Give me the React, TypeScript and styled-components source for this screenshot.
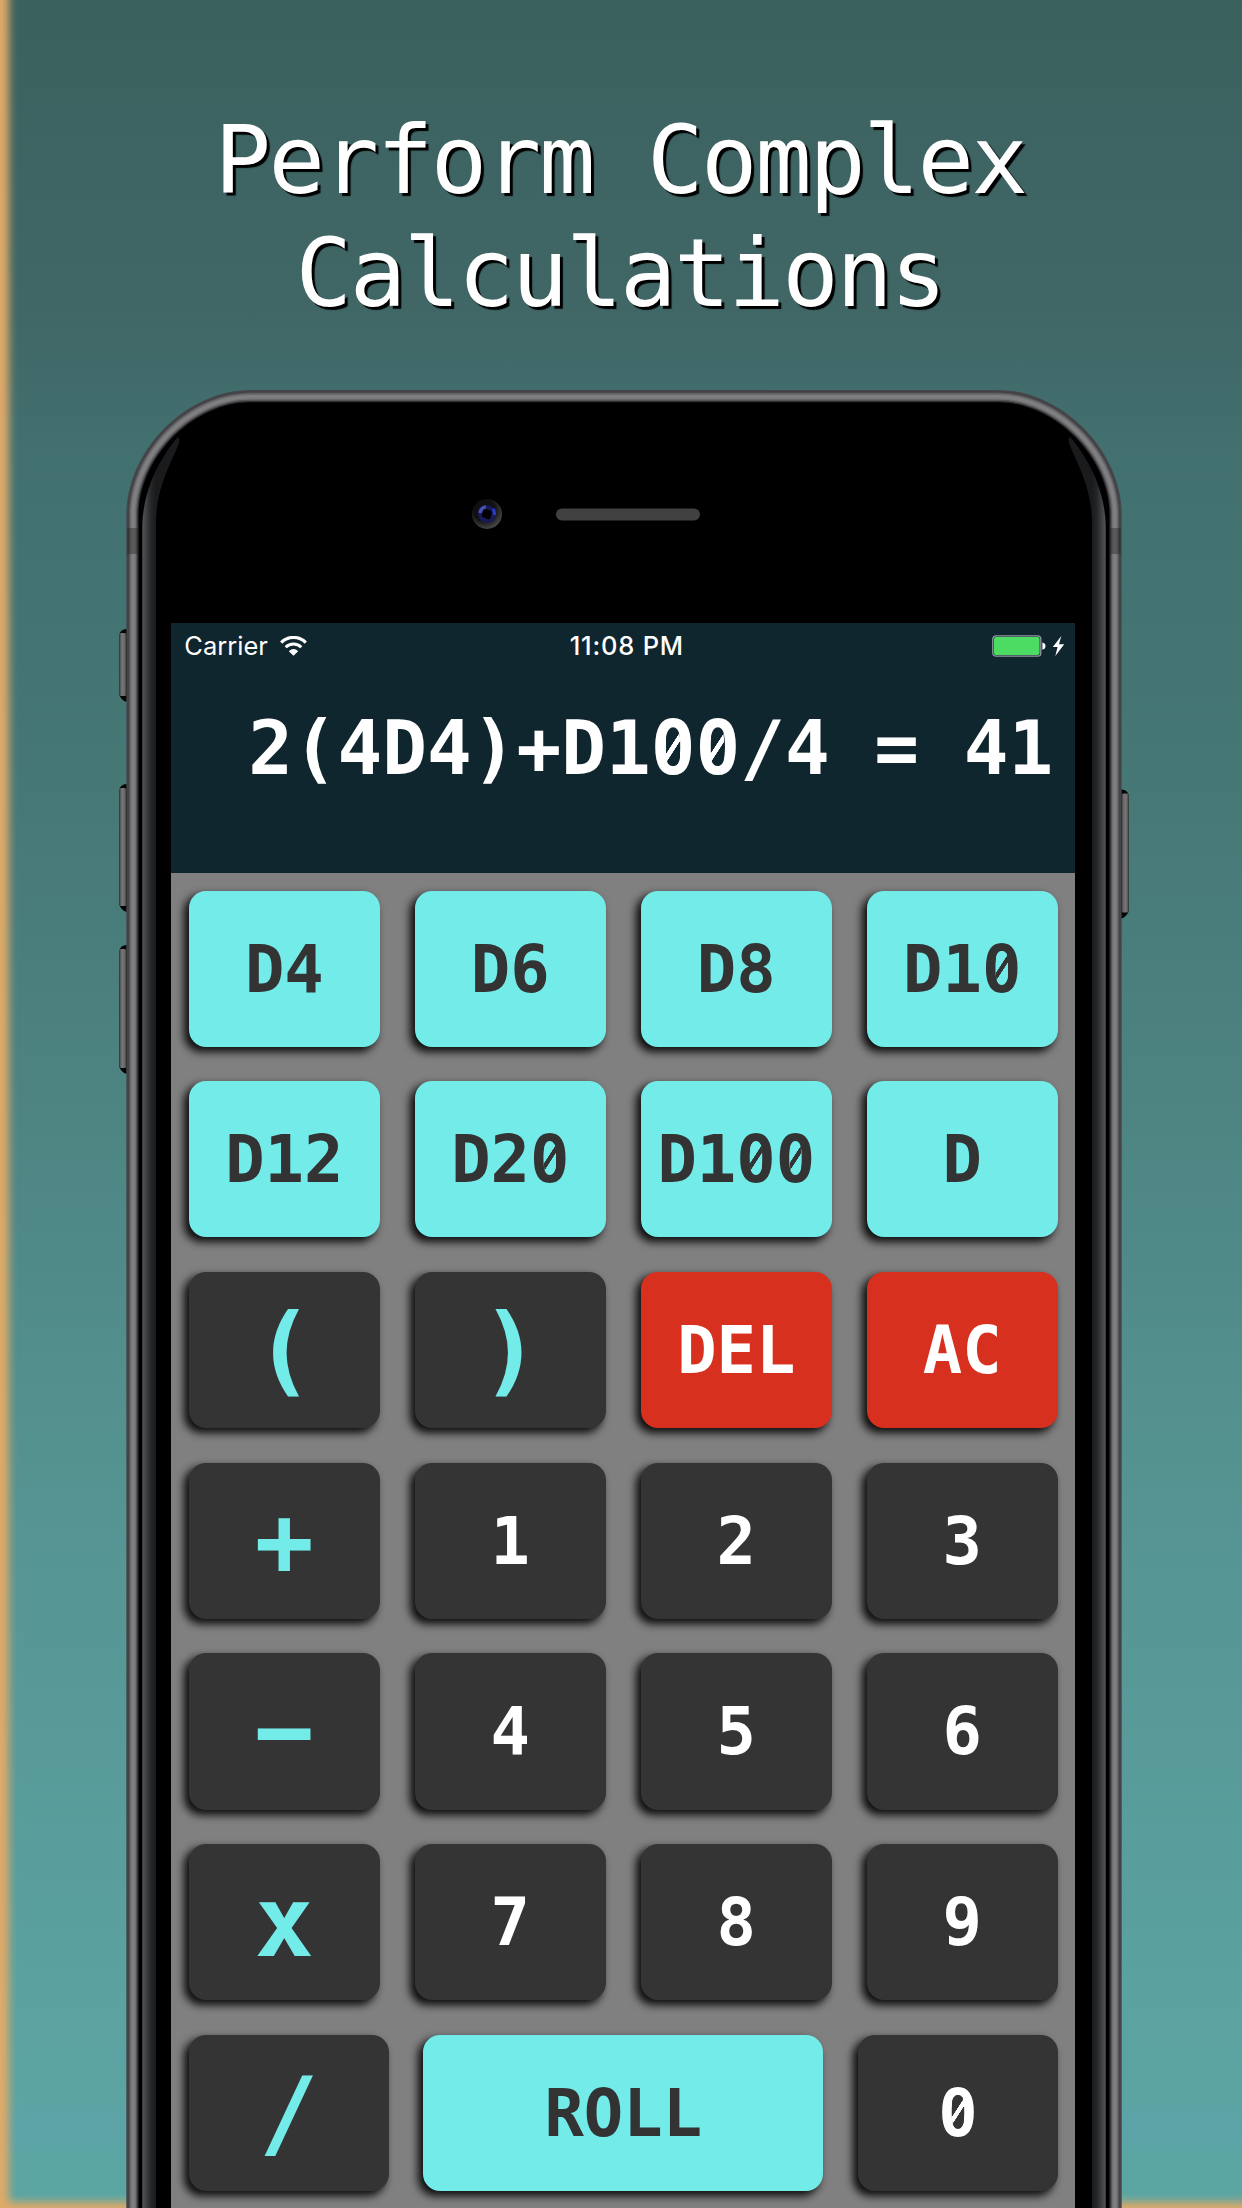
import React from "react";
import styled, { createGlobalStyle } from "styled-components";

const mono = '"DejaVu Sans Mono", monospace';

const GlobalStyle = createGlobalStyle`
  * { box-sizing: border-box; }
  body { margin: 0; }
`;

const Poster = styled.main`
  position: relative;
  width: 1242px;
  height: 2208px;
  overflow: hidden;
  display: flex;
  flex-direction: column;
  align-items: center;
  background: linear-gradient(#3b615f 0%, #406766 14%, #41706f 20%, #467876 36%, #4d8482 50%, #559492 68%, #5ba2a1 91%, #5ba4a2 95.2%, #5ca3a8 96.2%, #5ca4a8 96.9%, #5ba5a3 97.7%, #5ba5a3 100%);
  &::before {
    content: "";
    position: absolute;
    inset: -60px -80px -40px -40px;
    border: solid #dfaa68;
    border-width: 0 0 46px 49px;
    filter: blur(4.2px);
  }
`;

const Title = styled.h1`
  position: relative;
  flex: none;
  margin: 104px 0 0 -2px;
  height: 286px;
  font: 400 93.8px/113.3px ${mono};
  letter-spacing: -2.4px;
  color: #fff;
  text-align: center;
  text-shadow: 3px 3px 1px #000;
  white-space: pre-line;
`;

const Phone = styled.section`
  position: relative;
  width: 996px;
  height: 1830px;
  margin-left: 4px;
  flex: none;
`;

const Chassis = styled.svg`
  position: absolute;
  inset: 0;
  display: block;
`;

const Forehead = styled.div`
  height: 233px;
`;

const Screen = styled.div`
  position: relative;
  width: 904px;
  margin-left: 46.3px;
  background: #808080;
`;

const Display = styled.header`
  height: 250.2px;
  background: #10262e;
  color: #fff;
`;

const StatusBar = styled.div`
  height: 45px;
  display: grid;
  grid-template-columns: 1fr auto 1fr;
  align-items: center;
  padding: 0 10px 0 13px;
  font: 400 25.5px/45px Inter, sans-serif;
`;

const Carrier = styled.div`
  display: flex;
  align-items: center;
  gap: 12px;
`;

const Clock = styled.div`
  padding-left: 4px;
  font-weight: 500;
  letter-spacing: 0.8px;
`;

const Power = styled.div`
  display: flex;
  justify-content: flex-end;
  align-items: center;
`;

const Expression = styled.output`
  display: block;
  padding: 38px 22px 0 0;
  text-align: right;
  white-space: pre;
  font: 700 74.3px/1.164 ${mono};
`;

const Zero = styled.span<{ $face: string }>`
  position: relative;
  display: inline-block;
  &::after {
    content: "";
    position: absolute;
    left: calc(50% - 0.09em);
    top: 0.313em;
    width: 0.18em;
    height: 0.5em;
    border-radius: 50% / 24%;
    background: linear-gradient(
      123deg,
      ${(p) => p.$face} calc(50% - 0.036em),
      currentColor calc(50% - 0.03em),
      currentColor calc(50% + 0.03em),
      ${(p) => p.$face} calc(50% + 0.036em)
    );
  }
`;

const Keypad = styled.div`
  display: flex;
  flex-direction: column;
  gap: 34.5px;
  padding: 17.4px 17.4px 18px;
`;

const KeyRow = styled.div<{ $columns: string }>`
  display: grid;
  grid-template-columns: ${(p) => p.$columns};
  gap: 34.7px;
`;

type Tone = "die" | "danger" | "digit" | "operator";

const tones: Record<Tone, { face: string; ink: string; size: number }> = {
  die: { face: "#73ebe9", ink: "#333333", size: 65.5 },
  danger: { face: "#d8301e", ink: "#ffffff", size: 65.5 },
  digit: { face: "#343434", ink: "#ffffff", size: 65.5 },
  operator: { face: "#343434", ink: "#73ebe9", size: 98 },
};

const Key = styled.button<{ $tone: Tone }>`
  height: 156.2px;
  min-width: 0;
  padding: 0;
  border: 0;
  border-radius: 17px;
  display: flex;
  align-items: center;
  justify-content: center;
  background: ${(p) => tones[p.$tone].face};
  color: ${(p) => tones[p.$tone].ink};
  font: 700 ${(p) => tones[p.$tone].size}px/1.164 ${mono};
  box-shadow: -4.4px 4.4px 9px rgba(0, 0, 0, 0.9);
`;

const quarters = "repeat(4, 1fr)";

const rows: { columns: string; keys: [string, Tone][] }[] = [
  { columns: quarters, keys: [["D4", "die"], ["D6", "die"], ["D8", "die"], ["D10", "die"]] },
  { columns: quarters, keys: [["D12", "die"], ["D20", "die"], ["D100", "die"], ["D", "die"]] },
  { columns: quarters, keys: [["(", "operator"], [")", "operator"], ["DEL", "danger"], ["AC", "danger"]] },
  { columns: quarters, keys: [["+", "operator"], ["1", "digit"], ["2", "digit"], ["3", "digit"]] },
  { columns: quarters, keys: [["−", "operator"], ["4", "digit"], ["5", "digit"], ["6", "digit"]] },
  { columns: quarters, keys: [["x", "operator"], ["7", "digit"], ["8", "digit"], ["9", "digit"]] },
  { columns: "200px 1fr 200px", keys: [["/", "operator"], ["ROLL", "die"], ["0", "digit"]] },
];

/* Numerals with a slashed zero. */
function Slashed({ text, face }: { text: string; face: string }) {
  return (
    <span>
      {text.split(/(0)/).map((part, i) =>
        part === "0" ? (
          <Zero key={i} $face={face}>
            0
          </Zero>
        ) : (
          part
        ),
      )}
    </span>
  );
}

const body = (inset: number) => {
  const l = 1.3 + inset;
  const r = 996.7 - inset;
  const k = 60 + inset * 0.55;
  return `M${l} 1900V125C${l} ${k} ${k + 2} ${inset} 125 ${inset}H873C${996 - k} ${inset} ${r} ${k} ${r} 125V1900Z`;
};

const metal: [number, string][] = [
  [0, "#47474b"],
  [1.3, "#414146"],
  [2.6, "#55555a"],
  [3.6, "#6b6b6e"],
  [5, "#7f7f81"],
  [8.5, "#707073"],
  [9.8, "#545457"],
  [11, "#2e2e32"],
  [12.2, "#000"],
];

const mirror = "translate(998 0) scale(-1 1)";

function SideButton({ y, h, right }: { y: number; h: number; right?: boolean }) {
  return (
    <g transform={right ? mirror : undefined}>
      <path d={`M8 ${y}H1Q-5.7 ${y + 1} -5.7 ${y + 7}V${y + h - 7}Q-3 ${y + h - 1} 2 ${y + h}H8Z`} fill="#050505" />
      <rect x="-5.7" y={y + 4} width="7" height={h - 10} rx="1.5" fill="url(#buttonMetal)" />
    </g>
  );
}

function Shine({ right }: { right?: boolean }) {
  return (
    <path
      transform={right ? mirror : undefined}
      d="M17.3 1900V135C18 103 32 72 52 48Q55 45 54 53C44 78 31 98 31 135V1900Z"
      fill="url(#shine)"
    />
  );
}

function PhoneBody() {
  return (
    <Chassis width="996" height="1830" overflow="visible" aria-hidden>
      <defs>
        <linearGradient id="shine" gradientUnits="userSpaceOnUse" x1="17" x2="31" y1="0" y2="0">
          <stop offset="0" stopColor="#555758" />
          <stop offset=".3" stopColor="#3e4041" />
          <stop offset=".65" stopColor="#242628" />
          <stop offset="1" stopColor="#191b1d" />
        </linearGradient>
        <linearGradient id="buttonMetal">
          <stop offset="0" stopColor="#444" />
          <stop offset=".4" stopColor="#777" />
          <stop offset=".8" stopColor="#666" />
          <stop offset="1" stopColor="#333" />
        </linearGradient>
        <radialGradient id="lensRing" cx=".4" cy=".35" r=".65">
          <stop offset=".55" stopColor="#101010" />
          <stop offset="1" stopColor="#454545" />
        </radialGradient>
      </defs>
      <SideButton y={239} h={73} />
      <SideButton y={394} h={128} />
      <SideButton y={555} h={129} />
      <SideButton y={399.5} h={129} right />
      {metal.map(([inset, color]) => (
        <path key={inset} d={body(inset)} fill={color} />
      ))}
      <rect x="2.3" y="138" width="11" height="26" fill="#222" opacity=".4" />
      <rect x="984.7" y="138" width="11" height="26" fill="#222" opacity=".4" />
      <Shine />
      <Shine right />
      <circle cx="362" cy="124" r="15" fill="url(#lensRing)" />
      <circle cx="362" cy="124" r="9" fill="#171a55" />
      <path d="M355 123A7 7 0 0 1 361 117" stroke="#4652b0" strokeWidth="3.5" fill="none" />
      <path d="M368 119A7 7 0 0 1 369 125" stroke="#2c37bd" strokeWidth="3.5" fill="none" />
      <rect x="357.5" y="119.5" width="9" height="9" rx="2" fill="#000" transform="rotate(20 362 124)" />
      <rect x="431" y="118.5" width="144" height="12" rx="6" fill="#414141" />
    </Chassis>
  );
}

function WifiIcon() {
  return (
    <svg width="27" height="20" viewBox="0 0 27 20">
      <path d="M1.2 6.6A17.3 17.3 0 0 1 25.8 6.6" fill="none" stroke="#fff" strokeWidth="3.2" />
      <path d="M5.7 11.2A11 11 0 0 1 21.3 11.2" fill="none" stroke="#fff" strokeWidth="3" />
      <path d="M13.5 19.8L8.8 15.2Q13.5 11 18.2 15.2Z" fill="#fff" />
    </svg>
  );
}

function BatteryIcon() {
  return (
    <svg width="73" height="22" viewBox="0 0 73 22">
      <rect x=".8" y=".8" width="48" height="20.4" rx="3.2" fill="#10262e" stroke="#929b9f" strokeWidth="1.3" />
      <rect x="2" y="2" width="45.6" height="18" rx="2" fill="#4cdc64" />
      <path d="M50.4 7.5Q53.5 8 53.5 11T50.4 14.6Z" fill="#fff" />
      <path d="M69.3 1L60.8 12H65.6L63.3 21L72.2 9.2H67Z" fill="#fff" />
    </svg>
  );
}

export default function App() {
  return (
    <>
      <GlobalStyle />
      <Poster>
        <Title>{"Perform Complex\nCalculations"}</Title>
        <Phone>
          <PhoneBody />
          <Forehead />
          <Screen>
            <Display>
              <StatusBar>
                <Carrier>
                  Carrier
                  <WifiIcon />
                </Carrier>
                <Clock>11:08 PM</Clock>
                <Power>
                  <BatteryIcon />
                </Power>
              </StatusBar>
              <Expression>
                <Slashed text="2(4D4)+D100/4 = 41" face="#10262e" />
              </Expression>
            </Display>
            <Keypad>
              {rows.map((row, i) => (
                <KeyRow key={i} $columns={row.columns}>
                  {row.keys.map(([label, tone]) => (
                    <Key key={label} $tone={tone}>
                      <Slashed text={label} face={tones[tone].face} />
                    </Key>
                  ))}
                </KeyRow>
              ))}
            </Keypad>
          </Screen>
        </Phone>
      </Poster>
    </>
  );
}
